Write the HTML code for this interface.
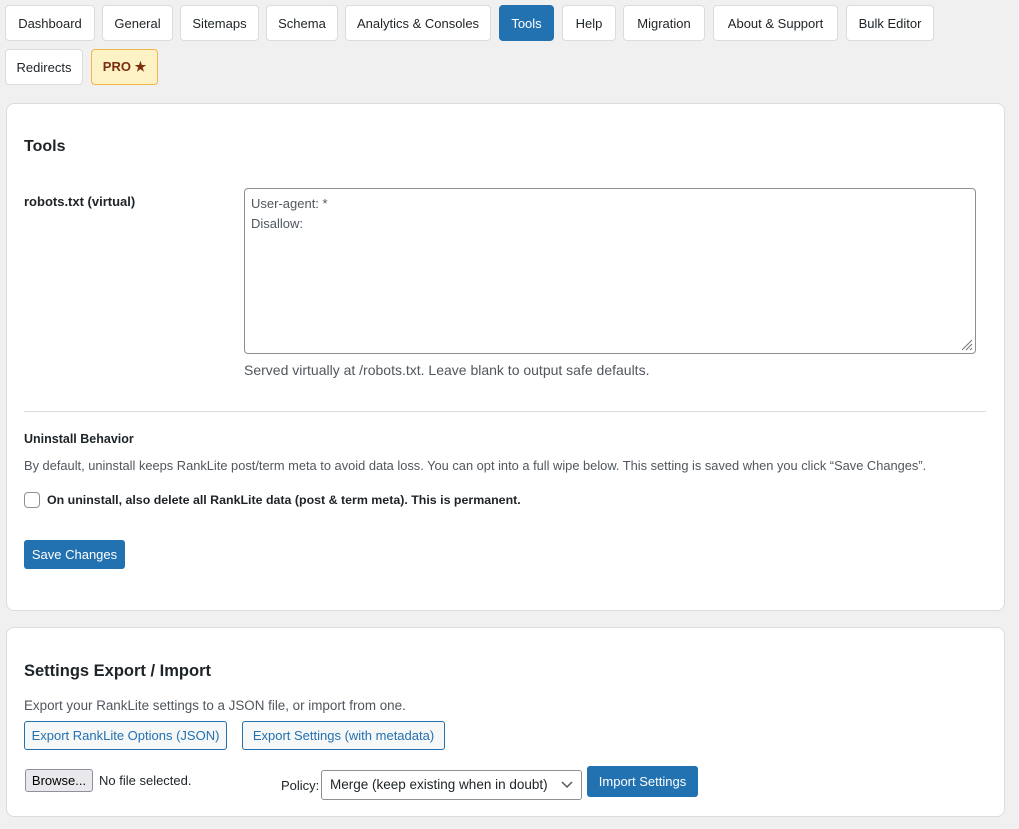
<!DOCTYPE html>
<html><head><meta charset="utf-8"><style>
*{box-sizing:border-box;margin:0;padding:0}
body{width:1019px;height:829px;background:#f0f0f1;font-family:"Liberation Sans",sans-serif;color:#1d2327;font-size:13px;position:relative;overflow:hidden}
.a{position:absolute;white-space:nowrap}
.tab{position:absolute;height:36px;background:#fff;border:1px solid #dcdcde;border-radius:4px;display:flex;align-items:center;justify-content:center;font-size:13px;color:#1d2327}
.panel{position:absolute;left:6px;width:999px;background:#fff;border:1px solid #dcdcde;border-radius:8px}
.btnb{position:absolute;background:#2271b1;color:#fff;border-radius:3px;display:flex;align-items:center;justify-content:center;font-size:13px}
.btno{position:absolute;background:#f6f7f7;color:#2271b1;border:1px solid #2271b1;border-radius:3px;display:flex;align-items:center;justify-content:center;font-size:13px}
</style></head><body>
<div class="tab" style="left:5px;top:5px;width:90px">Dashboard</div>
<div class="tab" style="left:102px;top:5px;width:71px">General</div>
<div class="tab" style="left:180px;top:5px;width:79px">Sitemaps</div>
<div class="tab" style="left:266px;top:5px;width:72px">Schema</div>
<div class="tab" style="left:345px;top:5px;width:146px">Analytics &amp; Consoles</div>
<div class="tab" style="left:499px;top:5px;width:55px;background:#2271b1;border-color:#2271b1;color:#fff">Tools</div>
<div class="tab" style="left:562px;top:5px;width:54px">Help</div>
<div class="tab" style="left:623px;top:5px;width:82px">Migration</div>
<div class="tab" style="left:713px;top:5px;width:125px">About &amp; Support</div>
<div class="tab" style="left:846px;top:5px;width:88px">Bulk Editor</div>
<div class="tab" style="left:5px;top:49px;width:78px">Redirects</div>
<div class="tab" style="left:91px;top:49px;width:67px;background:#fdf1c6;border-color:#f0b849;color:#7a2e0e;font-weight:bold">PRO ★</div>

<div class="panel" style="top:103px;height:508px"></div>
<div class="a" style="left:24px;top:138px;font-size:16px;font-weight:bold">Tools</div>
<div class="a" style="left:24px;top:194px;font-weight:bold">robots.txt (virtual)</div>
<div class="a" style="left:244px;top:188px;width:732px;height:166px;border:1px solid #8c8f94;border-radius:4px;padding:5px 6px;color:#50575e;font-size:13px;line-height:20px;white-space:pre">User-agent: *
Disallow:</div>
<svg class="a" style="left:960px;top:338px" width="13" height="13"><path d="M12 2L2 12M12 6L6 12M12 10L10 12" stroke="#777" stroke-width="1"/></svg>
<div class="a" style="left:244px;top:362px;color:#50575e;font-size:14px">Served virtually at /robots.txt. Leave blank to output safe defaults.</div>
<div class="a" style="left:24px;top:411px;width:962px;height:1px;background:#dcdcde"></div>
<div class="a" style="left:24px;top:432px;font-weight:bold;font-size:12.5px">Uninstall Behavior</div>
<div class="a" style="left:24px;top:458px;font-size:12.85px;color:#50575e">By default, uninstall keeps RankLite post/term meta to avoid data loss. You can opt into a full wipe below. This setting is saved when you click “Save Changes”.</div>
<div class="a" style="left:24px;top:492px;width:16px;height:16px;border:1px solid #8c8f94;border-radius:4px;background:#fff"></div>
<div class="a" style="left:47px;top:493px;font-weight:bold;font-size:12.4px">On uninstall, also delete all RankLite data (post &amp; term meta). This is permanent.</div>
<div class="btnb" style="left:24px;top:540px;width:101px;height:29px">Save Changes</div>

<div class="panel" style="top:627px;height:190px"></div>
<div class="a" style="left:24px;top:662px;font-size:16.5px;font-weight:bold">Settings Export / Import</div>
<div class="a" style="left:24px;top:698px;font-size:13.4px;color:#50575e">Export your RankLite settings to a JSON file, or import from one.</div>
<div class="btno" style="left:24px;top:721px;width:203px;height:29px">Export RankLite Options (JSON)</div>
<div class="btno" style="left:242px;top:721px;width:203px;height:29px">Export Settings (with metadata)</div>
<div class="a" style="left:25px;top:769px;width:68px;height:23px;background:#e9e9ed;border:1px solid #8f8f9d;border-radius:3px;display:flex;align-items:center;justify-content:center;color:#000">Browse...</div>
<div class="a" style="left:99px;top:773px;color:#1d2327">No file selected.</div>
<div class="a" style="left:281px;top:778px">Policy:</div>
<div class="a" style="left:321px;top:770px;width:261px;height:30px;border:1px solid #8c8f94;border-radius:3px;padding:0 8px;line-height:28px;font-size:13.5px">Merge (keep existing when in doubt)</div>
<svg class="a" style="left:561px;top:780px" width="12" height="10"><path d="M1 2L6 7L11 2" fill="none" stroke="#50575e" stroke-width="1.5"/></svg>
<div class="btnb" style="left:587px;top:766px;width:111px;height:31px">Import Settings</div>
</body></html>
